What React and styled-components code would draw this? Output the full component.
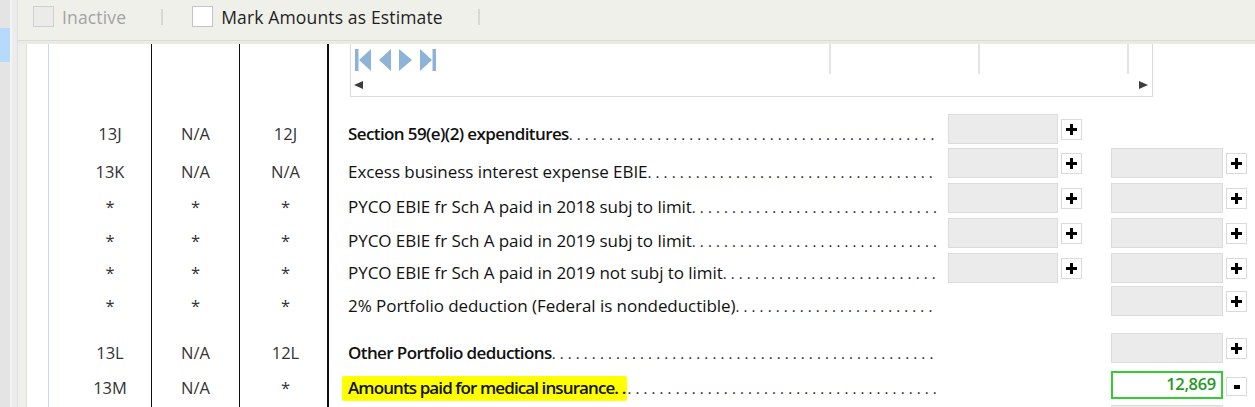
import React from "react"
import styled, { createGlobalStyle, css } from "styled-components"

const GlobalStyle = createGlobalStyle`
  html, body {
    margin: 0;
    padding: 0;
    height: 407px;
    overflow: hidden;
    background: #fff;
    font-family: "Open Sans", "Noto Sans", sans-serif;
  }
`

const rows = [
  { a: "13J", b: "N/A", c: "12J", label: "Section 59(e)(2) expenditures", bold: true, h: 34, ty: 12, left: "plus" },
  { a: "13K", b: "N/A", c: "N/A", label: "Excess business interest expense EBIE", h: 35, ty: 16, left: "plus", right: "plus" },
  { a: "*", b: "*", c: "*", label: "PYCO EBIE fr Sch A paid in 2018 subj to limit", h: 35, ty: 16, left: "plus", right: "plus" },
  { a: "*", b: "*", c: "*", label: "PYCO EBIE fr Sch A paid in 2019 subj to limit", h: 35, ty: 15, left: "plus", right: "plus" },
  { a: "*", b: "*", c: "*", label: "PYCO EBIE fr Sch A paid in 2019 not subj to limit", h: 33, ty: 12, left: "plus", right: "plus" },
  { a: "*", b: "*", c: "*", label: "2% Portfolio deduction (Federal is nondeductible)", h: 47, ty: 12, right: "plus" },
  { a: "13L", b: "N/A", c: "12L", label: "Other Portfolio deductions", bold: true, h: 38, ty: 12, right: "plus" },
  { a: "13M", b: "N/A", c: "*", label: "Amounts paid for medical insurance.", bold: true, mark: true, h: 34, ty: 9, right: "minus", value: "12,869" },
  { a: "", b: "", c: "", label: "", h: 34, ty: 12, right: "plus" },
]

const PlusIcon = () => (
  <svg width="11" height="11" viewBox="0 0 11 11">
    <path d="M4 0h3v4h4v3H7v4H4V7H0V4h4z" fill="#000" />
  </svg>
)

const MinusIcon = () => (
  <svg width="6" height="4" viewBox="0 0 6 4">
    <rect width="6" height="4" fill="#000" />
  </svg>
)

const NavIcon = ({ kind }) => {
  const fill = "#8db3d6"
  if (kind === "first")
    return (
      <svg width="16" height="22" viewBox="0 0 16 22">
        <rect x="0" y="0" width="3.5" height="22" fill={fill} />
        <path d="M4 11L16 0v22z" fill={fill} />
      </svg>
    )
  if (kind === "prev")
    return (
      <svg width="12" height="22" viewBox="0 0 12 22">
        <path d="M0 11L12 0v22z" fill={fill} />
      </svg>
    )
  if (kind === "next")
    return (
      <svg width="13" height="22" viewBox="0 0 13 22">
        <path d="M13 11L0 0v22z" fill={fill} />
      </svg>
    )
  return (
    <svg width="16" height="22" viewBox="0 0 16 22">
      <path d="M12 11L0 0v22z" fill={fill} />
      <rect x="12.5" y="0" width="3.5" height="22" fill={fill} />
    </svg>
  )
}

const App = () => {
  return (
    <>
      <GlobalStyle />
      <Page>
        <Sidebar>
          <SideItem />
        </Sidebar>
        <Splitter />
        <Main>
          <Toolbar>
            <CheckBox $disabled />
            <ToolLabel $disabled>Inactive</ToolLabel>
            <ToolSep />
            <CheckBox />
            <ToolLabel>Mark Amounts as Estimate</ToolLabel>
            <ToolSep />
          </Toolbar>
          <Body>
            <Gutter />
            <Sheet>
              <Row $h={68}>
                <Cell />
                <CodeCell $first />
                <CodeCell />
                <CodeCell $thick />
                <NavCell>
                  <NavBox>
                    <NavHeader>
                      <NavHead $w={481}>
                        <NavIcon kind="first" />
                        <NavIcon kind="prev" />
                        <NavIcon kind="next" />
                        <NavIcon kind="last" />
                      </NavHead>
                      <NavHead $w={149} />
                      <NavHead $w={149} />
                      <NavHead $w={23} $last />
                    </NavHeader>
                    <ScrollBar>
                      <ScrollArrow $dir="left" />
                      <ScrollArrow $dir="right" />
                    </ScrollBar>
                  </NavBox>
                </NavCell>
              </Row>
              {rows.map((r, i) => (
                <Row key={i} $h={r.h}>
                  <Cell />
                  <CodeCell $ty={r.ty} $first>{r.a}</CodeCell>
                  <CodeCell $ty={r.ty}>{r.b}</CodeCell>
                  <CodeCell $ty={r.ty} $thick $shift>{r.c}</CodeCell>
                  <LabelCell $ty={r.ty}>
                    {r.label && (
                      <>
                        <LabelText $bold={r.bold} $mark={r.mark}>
                          {r.label}
                          {r.mark ? " ." : ""}
                        </LabelText>
                        <Leader>{" .".repeat(90)}</Leader>
                      </>
                    )}
                  </LabelCell>
                  <InputCell $pl={8}>
                    {r.left && (
                      <>
                        <AmountBox $w={110} />
                        <SquareButton>
                          <PlusIcon />
                        </SquareButton>
                      </>
                    )}
                  </InputCell>
                  <InputCell>
                    {r.right && (
                      <>
                        <AmountBox $w={112} $active={!!r.value}>
                          {r.value}
                        </AmountBox>
                        <SquareButton $small={r.right === "minus"}>
                          {r.right === "minus" ? <MinusIcon /> : <PlusIcon />}
                        </SquareButton>
                      </>
                    )}
                  </InputCell>
                </Row>
              ))}
            </Sheet>
          </Body>
        </Main>
      </Page>
    </>
  )
}

const Page = styled.div`
  display: flex;
  width: 1255px;
  height: 407px;
  overflow: hidden;
`

const Sidebar = styled.div`
  flex: 0 0 10px;
  background: #e4e4e4;
  padding-top: 28px;
`

const SideItem = styled.div`
  height: 34px;
  background: #b6dafc;
`

const Splitter = styled.div`
  flex: 0 0 8px;
  box-sizing: border-box;
  background: #ececec;
  border-left: 2px solid #f4f4f4;
  border-right: 1px solid #dedede;
`

const Main = styled.div`
  flex: 1;
  display: flex;
  flex-direction: column;
  min-width: 0;
`

const Toolbar = styled.div`
  height: 35px;
  flex: 0 0 35px;
  box-sizing: content-box;
  display: flex;
  align-items: flex-start;
  padding: 5px 0 0 15px;
  background: #f0f0eb;
  border-bottom: 1px solid #dcdcd6;
  box-shadow: 0 3px 0 #ebebe5;
  margin-bottom: 3px;
`

const CheckBox = styled.span`
  width: 21px;
  height: 21px;
  flex: 0 0 21px;
  margin-top: 1px;
  box-sizing: border-box;
  border: 1px solid #c4c4c4;
  background: #fff;
  margin-right: 8px;
  ${({ $disabled }) =>
    $disabled &&
    css`
      background: #ebebea;
      border-color: #cfcfcf;
    `}
`

const ToolLabel = styled.span`
  font-size: 17.5px;
  line-height: 24px;
  color: ${({ $disabled }) => ($disabled ? "#a3a3a3" : "#1e1e1e")};
  margin-right: 35px;
  letter-spacing: 0.15px;
`

const ToolSep = styled.span`
  width: 2px;
  height: 16px;
  margin-top: 4px;
  background: #d9d9d4;
  margin-right: 29px;
`

const Body = styled.div`
  flex: 1;
  display: flex;
  background: #fff;
  min-height: 0;
`

const Gutter = styled.div`
  flex: 0 0 8px;
  background: #f0f0ea;
  border-right: 1px solid #e2e2dc;
`

const Sheet = styled.div`
  flex: 1;
  display: flex;
  flex-direction: column;
  font-size: 16.5px;
  color: #222;
`

const Row = styled.div`
  display: grid;
  grid-template-columns: 21px 104px 88px 89px 611px 171px 1fr;
  height: ${({ $h }) => $h}px;
  flex: 0 0 auto;
`

const Cell = styled.div``

const CodeCell = styled.div`
  box-sizing: border-box;
  border-right: ${({ $thick }) => ($thick ? "2px solid #111" : "1px solid #111")};
  text-align: center;
  line-height: 20px;
  padding-top: ${({ $ty }) => $ty || 0}px;
  color: #333;
  ${({ $first }) =>
    $first &&
    css`
      border-left: 1px solid #c5d9ef;
      padding-left: 20px;
    `}
  ${({ $shift }) =>
    $shift &&
    css`
      padding-left: 4px;
    `}
`

const LabelCell = styled.div`
  display: flex;
  white-space: nowrap;
  overflow: hidden;
  padding: ${({ $ty }) => $ty}px 3px 0 19px;
  line-height: 20px;
  align-items: flex-start;
  min-width: 0;
`

const LabelText = styled.span`
  flex: 0 0 auto;
  font-size: 17px;
  color: #111;
  font-weight: ${({ $bold }) => ($bold ? 600 : 400)};
  letter-spacing: ${({ $bold }) => ($bold ? "-0.6px" : "-0.05px")};
  ${({ $mark }) =>
    $mark &&
    css`
      letter-spacing: -0.9px;
      background: #ffff00;
      margin-left: -6px;
      padding: 2px 2px 3px 6px;
      margin-top: -2px;
      border-radius: 2px;
    `}
`

const Leader = styled.span`
  flex: 1;
  overflow: hidden;
  font-size: 15px;
  color: #222;
  letter-spacing: 0.1px;
`

const InputCell = styled.div`
  display: flex;
  align-items: center;
  gap: 3px;
  height: 30px;
  margin-top: 2px;
  padding-left: ${({ $pl }) => $pl || 0}px;
`

const AmountBox = styled.div`
  width: ${({ $w }) => $w}px;
  height: 30px;
  box-sizing: border-box;
  background: #ebebeb;
  border: 1px solid #dcdcdc;
  text-align: right;
  font-size: 16.5px;
  line-height: 22px;
  padding-right: 5px;
  ${({ $active }) =>
    $active &&
    css`
      height: 28px;
      margin-top: -2px;
      background: #fff;
      border: 2px solid #33cc33;
      color: #269926;
      font-weight: 600;
      letter-spacing: -0.3px;
    `}
`

const SquareButton = styled.div`
  width: 21px;
  height: ${({ $small }) => ($small ? 19 : 21)}px;
  box-sizing: border-box;
  background: #fff;
  border: 1px solid #dadada;
  display: flex;
  align-items: center;
  justify-content: center;
  padding-top: ${({ $small }) => ($small ? 2 : 0)}px;
`

const NavCell = styled.div`
  grid-column: 5 / -1;
  padding-left: 21px;
`

const NavBox = styled.div`
  width: 803px;
  height: 53px;
  box-sizing: border-box;
  border: 1px solid #dcdcdc;
  border-top: none;
  display: flex;
  flex-direction: column;
`

const NavHeader = styled.div`
  display: flex;
  height: 30px;
`

const NavHead = styled.div`
  width: ${({ $w }) => $w}px;
  box-sizing: border-box;
  border-right: ${({ $last }) => ($last ? "none" : "2px solid #e4e4e4")};
  display: flex;
  align-items: flex-start;
  gap: 8px;
  padding: 5px 0 0 4px;
`

const ScrollBar = styled.div`
  flex: 1;
  display: flex;
  justify-content: space-between;
  align-items: center;
  padding: 0 4px 0 3px;
`

const ScrollArrow = styled.span`
  width: 0;
  height: 0;
  border-top: 4.5px solid transparent;
  border-bottom: 4.5px solid transparent;
  ${({ $dir }) =>
    $dir === "left"
      ? css`
          border-right: 9px solid #3d3d3d;
        `
      : css`
          border-left: 9px solid #3d3d3d;
        `}
`

export default App
